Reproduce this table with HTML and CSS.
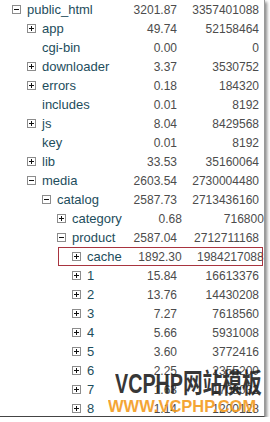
FILE: index.html
```html
<!DOCTYPE html>
<html lang="zh-CN">
<head>
  <meta charset="UTF-8" />
  <meta name="viewport" content="width=device-width, initial-scale=1.0">
  <title>public_html</title>
  <link rel="stylesheet" href="styles.css">
</head>
<body>
  <div class="panel">
    <div class="row d0"><span class="tog minus"></span><span class="name">public_html</span><span class="size">3201.87</span><span class="bytes">3357401088</span></div>
    <div class="row d1"><span class="tog plus"></span><span class="name">app</span><span class="size">49.74</span><span class="bytes">52158464</span></div>
    <div class="row d1"><span class="tog none"></span><span class="name">cgi-bin</span><span class="size">0.00</span><span class="bytes">0</span></div>
    <div class="row d1"><span class="tog plus"></span><span class="name">downloader</span><span class="size">3.37</span><span class="bytes">3530752</span></div>
    <div class="row d1"><span class="tog plus"></span><span class="name">errors</span><span class="size">0.18</span><span class="bytes">184320</span></div>
    <div class="row d1"><span class="tog none"></span><span class="name">includes</span><span class="size">0.01</span><span class="bytes">8192</span></div>
    <div class="row d1"><span class="tog plus"></span><span class="name">js</span><span class="size">8.04</span><span class="bytes">8429568</span></div>
    <div class="row d1"><span class="tog none"></span><span class="name">key</span><span class="size">0.01</span><span class="bytes">8192</span></div>
    <div class="row d1"><span class="tog plus"></span><span class="name">lib</span><span class="size">33.53</span><span class="bytes">35160064</span></div>
    <div class="row d1"><span class="tog minus"></span><span class="name">media</span><span class="size">2603.54</span><span class="bytes">2730004480</span></div>
    <div class="row d2"><span class="tog minus"></span><span class="name">catalog</span><span class="size">2587.73</span><span class="bytes">2713436160</span></div>
    <div class="row d3"><span class="tog plus"></span><span class="name">category</span><span class="size">0.68</span><span class="bytes">716800</span></div>
    <div class="row d3"><span class="tog minus"></span><span class="name">product</span><span class="size">2587.04</span><span class="bytes">2712711168</span></div>
    <div class="row d4 marked"><span class="tog plus"></span><span class="name">cache</span><span class="size">1892.30</span><span class="bytes">1984217088</span></div>
    <div class="row d4"><span class="tog plus"></span><span class="name">1</span><span class="size">15.84</span><span class="bytes">16613376</span></div>
    <div class="row d4"><span class="tog plus"></span><span class="name">2</span><span class="size">13.76</span><span class="bytes">14430208</span></div>
    <div class="row d4"><span class="tog plus"></span><span class="name">3</span><span class="size">7.27</span><span class="bytes">7618560</span></div>
    <div class="row d4"><span class="tog plus"></span><span class="name">4</span><span class="size">5.66</span><span class="bytes">5931008</span></div>
    <div class="row d4"><span class="tog plus"></span><span class="name">5</span><span class="size">3.60</span><span class="bytes">3772416</span></div>
    <div class="row d4"><span class="tog plus"></span><span class="name">6</span><span class="size">2.25</span><span class="bytes">2355200</span></div>
    <div class="row d4"><span class="tog plus"></span><span class="name">7</span><span class="size">1.63</span><span class="bytes">1708032</span></div>
    <div class="row d4"><span class="tog plus"></span><span class="name">8</span><span class="size">1.14</span><span class="bytes">1200128</span></div>

    <!-- watermark over the bottom of the list -->
    <div class="mark">
      <div class="mark-big">VCPHP网站模板</div>
      <div class="mark-url">WWW.VCPHP.COM</div>
    </div>
  </div>
</body>
</html>
```

FILE: styles.css
```css
body {
  margin: 0;
  background: #fff;
  font-family: "Liberation Sans", Arial, sans-serif;
}

.panel {
  position: relative;
  width: 264px;
  height: 416px;
  overflow: hidden;
  border-right: 1px solid #9a9a9a;
  border-bottom: 1px solid #444;
  box-shadow: 2px 2px 3px #8a8a8a;
}

.row {
  position: relative;
  display: flex;
  align-items: center;
  height: 19px;
}

.d0 { padding-left: 12px; }
.d1 { padding-left: 27px; }
.d2 { padding-left: 42px; }
.d3 { padding-left: 57px; }
.d4 { padding-left: 72px; }

.tog {
  position: relative;
  box-sizing: border-box;
  flex: none;
  width: 9px;
  height: 9px;
  margin-right: 6px;
  border: 1px solid #8c8c8c;
  background: #fff;
}

.tog::before,
.tog::after {
  content: "";
  position: absolute;
  background: #111;
}

.tog::before {
  left: 1px;
  top: 3px;
  width: 5px;
  height: 1px;
}

.plus::after {
  left: 3px;
  top: 1px;
  width: 1px;
  height: 5px;
}

.none {
  border: none;
  background: none;
}

.none::before {
  display: none;
}

.name {
  flex: 1;
  font-size: 13px;
  color: #1d4d5c;
  white-space: nowrap;
}

.size,
.bytes {
  flex: none;
  text-align: right;
  font-size: 12px;
  color: #4c4c4c;
}

.size {
  width: 60px;
}

.bytes {
  width: 82px;
  margin-right: 5px;
}

.marked::after {
  content: "";
  position: absolute;
  left: 58px;
  right: 1px;
  top: 0;
  bottom: 0;
  border: 1px solid #a8343f;
}

.mark {
  position: absolute;
  left: 108px;
  top: 371px;
  font-weight: bold;
  opacity: 0.9;
}

.mark-big {
  font-family: "Liberation Sans", "Noto Sans CJK SC", sans-serif;
  font-size: 27px;
  line-height: 27px;
  color: #222;
  white-space: nowrap;
  transform: scaleX(0.73);
  transform-origin: 0 0;
  margin-left: 7px;
}

.mark-url {
  font-family: "Liberation Sans", Arial, sans-serif;
  font-size: 16.5px;
  line-height: 16px;
  color: #f39c1f;
  white-space: nowrap;
}
```
